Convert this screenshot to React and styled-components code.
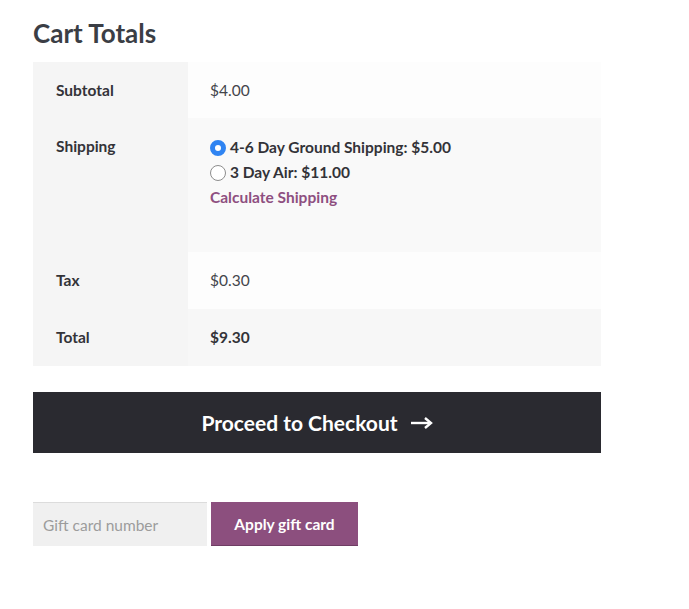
import React from 'react';
import styled, { createGlobalStyle } from 'styled-components';

const Global = createGlobalStyle`
  body {
    margin: 0;
    background: #ffffff;
    font-family: Lato, "Noto Sans", sans-serif;
    color: #43454b;
  }
`;

const Styled = {
  Page: styled.div`
    width: 568px;
    padding: 18px 0 0 33px;
  `,
  Title: styled.h2`
    margin: 0 0 14px;
    font-size: 26px;
    line-height: 30px;
    font-weight: 700;
    color: #3b3e45;
  `,
  Table: styled.table`
    width: 568px;
    border-collapse: collapse;
    border-spacing: 0;
    font-size: 15.5px;
  `,
  Th: styled.th`
    width: 155px;
    box-sizing: border-box;
    padding: 0 0 0 23px;
    height: ${(p) => p.h}px;
    vertical-align: top;
    text-align: left;
    font-weight: 700;
    color: #333338;
    background: #f5f5f5;
    line-height: 56px;
  `,
  Td: styled.td`
    padding: 0 0 0 22px;
    height: ${(p) => p.h}px;
    vertical-align: top;
    line-height: 56px;
    background: ${(p) => p.bg};
    font-weight: ${(p) => (p.strong ? 700 : 400)};
    color: ${(p) => (p.strong ? '#333338' : '#43454b')};
  `,
  Options: styled.div`
    display: flex;
    flex-direction: column;
    padding-top: 17px;
    line-height: 25px;
  `,
  Option: styled.label`
    display: flex;
    align-items: center;
    gap: 4px;
    font-weight: 700;
    color: #333338;
  `,
  Radio: styled.span`
    box-sizing: border-box;
    width: 16px;
    height: 16px;
    border-radius: 50%;
    flex-shrink: 0;
    border: ${(p) => (p.checked ? '5px solid #2f84f2' : '1px solid #8d8d8d')};
    background: #ffffff;
  `,
  Calc: styled.a`
    font-weight: 700;
    color: #8e4f80;
    text-decoration: none;
  `,
  Checkout: styled.button`
    display: flex;
    align-items: center;
    justify-content: center;
    gap: 13px;
    width: 568px;
    height: 61px;
    margin-top: 26px;
    border: 0;
    background: #2a2a30;
    color: #ffffff;
    font-family: inherit;
    font-size: 21px;
    font-weight: 700;
  `,
  GiftRow: styled.div`
    display: flex;
    gap: 4px;
    margin-top: 49px;
  `,
  GiftInput: styled.input`
    box-sizing: border-box;
    width: 174px;
    height: 44px;
    padding: 0 10px;
    border: 0;
    border-top: 1px solid #dcdcdc;
    background: #f0f0f0;
    font-family: inherit;
    font-size: 15.5px;
    color: #43454b;
    &::placeholder {
      color: #9c9c9c;
    }
  `,
  GiftButton: styled.button`
    box-sizing: border-box;
    width: 147px;
    height: 44px;
    border: 0;
    border-bottom: 1px solid #6f3d64;
    background: #8c4f7e;
    color: #ffffff;
    font-family: inherit;
    font-size: 15.5px;
    font-weight: 700;
  `,
};

const Arrow = () => (
  <svg width="22" height="12" viewBox="0 0 22 12" aria-hidden="true">
    <path d="M0 6h18" stroke="#fff" strokeWidth="2.4" />
    <path d="M14 1l6 5-6 5" stroke="#fff" strokeWidth="2.4" fill="none" />
  </svg>
);

const App = () => (
  <Styled.Page>
    <Global />
    <Styled.Title>Cart Totals</Styled.Title>
    <Styled.Table>
      <tbody>
        <tr>
          <Styled.Th h={56}>Subtotal</Styled.Th>
          <Styled.Td h={56} bg="#fdfdfd">$4.00</Styled.Td>
        </tr>
        <tr>
          <Styled.Th h={134}>Shipping</Styled.Th>
          <Styled.Td h={134} bg="#f9f9f9">
            <Styled.Options>
              <Styled.Option>
                <Styled.Radio checked />
                4-6 Day Ground Shipping: $5.00
              </Styled.Option>
              <Styled.Option>
                <Styled.Radio />
                3 Day Air: $11.00
              </Styled.Option>
              <Styled.Calc href="#">Calculate Shipping</Styled.Calc>
            </Styled.Options>
          </Styled.Td>
        </tr>
        <tr>
          <Styled.Th h={57}>Tax</Styled.Th>
          <Styled.Td h={57} bg="#fdfdfd">$0.30</Styled.Td>
        </tr>
        <tr>
          <Styled.Th h={57}>Total</Styled.Th>
          <Styled.Td h={57} bg="#f7f7f7" strong>$9.30</Styled.Td>
        </tr>
      </tbody>
    </Styled.Table>
    <Styled.Checkout>
      Proceed to Checkout <Arrow />
    </Styled.Checkout>
    <Styled.GiftRow>
      <Styled.GiftInput placeholder="Gift card number" />
      <Styled.GiftButton>Apply gift card</Styled.GiftButton>
    </Styled.GiftRow>
  </Styled.Page>
);

export default App;
